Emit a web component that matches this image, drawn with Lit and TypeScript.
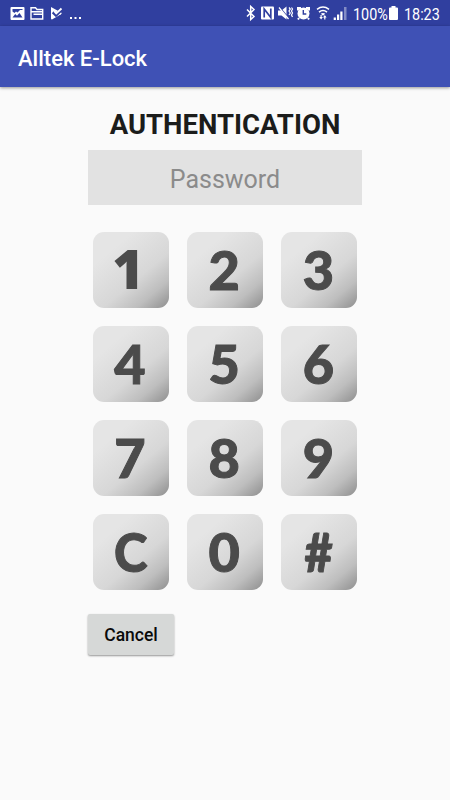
import { LitElement, html, css } from "lit";
import { customElement } from "lit/decorators.js";

const KEYS = [
  { label: "1", style: "one" },
  { label: "2", style: "" }, { label: "3", style: "" },
  { label: "4", style: "" }, { label: "5", style: "" }, { label: "6", style: "" },
  { label: "7", style: "" }, { label: "8", style: "" }, { label: "9", style: "" },
  { label: "C", style: "clear" }, { label: "0", style: "" }, { label: "#", style: "hash" },
];

@customElement("status-bar")
class StatusBar extends LitElement {
  static styles = css`
    :host { display: block; height: 26px; background: #303f9f; color: #fff; }
    .bar { display: flex; justify-content: space-between; }
    svg { display: block; flex: none; }
    .right { display: flex; height: 26px; }
    .text { font: 400 16.500px/29px Roboto, sans-serif; white-space: nowrap; transform: scaleX(.87); transform-origin: left; }
    .pct { width: 35px; margin-left: 2px; }
    .time { width: 46px; margin-left: 4px; }
  `;
  render() {
    return html`<div class="bar">
      <svg width="90" height="26" fill="#fff">
        <path fill-rule="evenodd" d="M11.500 7h12q1 0 1 1v11q0 1-1 1h-12q-1 0-1-1V8q0-1 1-1zM12.500 17.500h10l-3-4.500-2.500 2.800-1.800-1.800zM12.500 9v2.500l2 1.500 1.500-1.500 1.500 1L20 10h2.500V9z"/>
        <path d="M31 19V7.700h4.500l1.500 1.800h5.700V19zM31 11.800h12M33.500 14.200h9.500" fill="none" stroke="#fff" stroke-width="1.400"/>
        <path d="M51 7l10.500 5.700q.6.800-.5 1.500L52 19.500q-1 0-1-1z"/>
        <path d="M53 12l3 3 6.500-6.500" fill="none" stroke="#303f9f" stroke-width="3.200"/>
        <path d="M54 11l2.200 2.500L61.500 8.500" fill="none" stroke="#fff" stroke-width="1.800"/>
        <path d="M70 17h2v2h-2zM74.500 17h2v2h-2zM79 17h2v2h-2z"/>
      </svg>
      <div class="right">
        <svg width="107" height="26" viewBox="244 0 107 26" fill="#fff">
          <path d="M247 9.500l7 7-3.300 3V6.500l3.300 3-7 7" fill="none" stroke="#fff" stroke-width="1.500"/>
          <path d="M262 6.500h11q1 0 1 1v11q0 1-1 1h-11q-1 0-1-1v-11q0-1 1-1z"/>
          <path d="M264.200 17.500V9l6.600 8.500V8.500" fill="none" stroke="#303f9f" stroke-width="1.700"/>
          <path d="M278 10.500h3.500l5-4v13l-5-4H278z"/>
          <path d="M278.500 6l10.500 12.500" stroke="#303f9f" stroke-width="1.200"/>
          <path d="M279 7.500l9.500 11.500M289 7.500l1.300 1.500-1.300 2 1.300 2-1.300 2M291.500 7.500l1 1.500-1 2 1 2-1 2 1 2" fill="none" stroke="#fff" stroke-width="1.200"/>
          <circle cx="303.500" cy="13.500" r="6"/>
          <path d="M298 10.500V8h3M309 10.500V8H306M299 18l-1 1.500M308 18l1 1.500" fill="none" stroke="#fff" stroke-width="2"/>
          <path d="M303.300 10v4h3" fill="none" stroke="#303f9f" stroke-width="1.400"/>
          <path d="M317 9.300q6-4.500 12 0M319 12.200q4-3.300 8 0" fill="none" stroke="#fff" stroke-width="1.500"/>
          <path d="M320.800 13.800q2.200-1.500 4.400 0L323 15.800zM319.300 17h1.200v-2h1.200v2h1.200l-1.800 2.500zM323 17.500l1.800-2.500 1.800 2.500h-1.200v2h-1.200v-2z"/>
          <path d="M333.700 17.500h2.200V20h-2.200zM337 14.500h2.200V20H337zM340.300 11.500h2.200V20h-2.200z"/>
          <path d="M344 7h2.500v13H344z" opacity=".4"/>
        </svg>
        <span class="text pct">100%</span>
        <svg width="12" height="26" viewBox="-1 0 12 26" fill="#fff"><path d="M2.500 6h4v1.500H8q1 0 1 1V19q0 1-1 1H1q-1 0-1-1V8.500q0-1 1-1h1.500z"/></svg>
        <span class="text time">18:23</span>
      </div>
    </div>`;
  }
}

@customElement("app-root")
class AppRoot extends LitElement {
  static styles = css`
    :host { display: block; height: 800px; background: #fafafa; font-family: Roboto, sans-serif; overflow: hidden; }
    .header { height: 61px; background: #3f51b5; box-shadow: 0 1px 3px rgba(0, 0, 0, .4); color: #fff;
      display: flex; align-items: center; padding: 3px 18px 0; box-sizing: border-box; font-size: 22px; font-weight: 500; }
    .panel { width: 274px; margin: 0 auto; padding-top: 19px; }
    h1 { margin: 0; font-size: 27.500px; line-height: 38px; height: 44px; font-weight: 700; text-align: center; color: #1b1c1b; }
    .field { height: 55px; line-height: 59px; background: #e2e2e2; color: #8b8b8b; font-size: 25px; text-align: center; }
    .pad { display: grid; grid-template-columns: repeat(3, 76px); grid-auto-rows: 76px; gap: 18.200px; margin: 26.500px 5px 0; }
    .key { border-radius: 11px; display: flex; align-items: center; justify-content: center; box-sizing: border-box; padding: 0 2px 1px 0;
      background: linear-gradient(140deg, #e5e5e5 24%, #d7d7d7 60%, #bebebe 80%, #8e8e8e 100%);
      color: #4b4b4b; font: 900 54px/75px Lato, sans-serif; -webkit-text-stroke: 1px #4b4b4b; }
    .one { font-family: "Open Sans", sans-serif; font-weight: 800; padding: 0 6px 4px 0; line-height: 72px; -webkit-text-stroke: 0; }
    .clear { padding-right: 0; }
    .clear span { transform: scaleX(.94); }
    .hash span { transform: scaleX(.9); }
    .cancel { margin-top: 24px; width: 86px; height: 41px; border-radius: 2px; background: #d6d8d7; color: #0a0a0a;
      box-shadow: 0 1px 2px rgba(0, 0, 0, .4); display: flex; align-items: center; justify-content: center; font-size: 17.500px; font-weight: 500; }
  `;
  render() {
    return html`
      <status-bar></status-bar>
      <div class="header">Alltek E-Lock</div>
      <div class="panel">
        <h1>AUTHENTICATION</h1>
        <div class="field">Password</div>
        <div class="pad">${KEYS.map((k) => html`<div class="key ${k.style}"><span>${k.label}</span></div>`)}</div>
        <div class="cancel">Cancel</div>
      </div>`;
  }
}
